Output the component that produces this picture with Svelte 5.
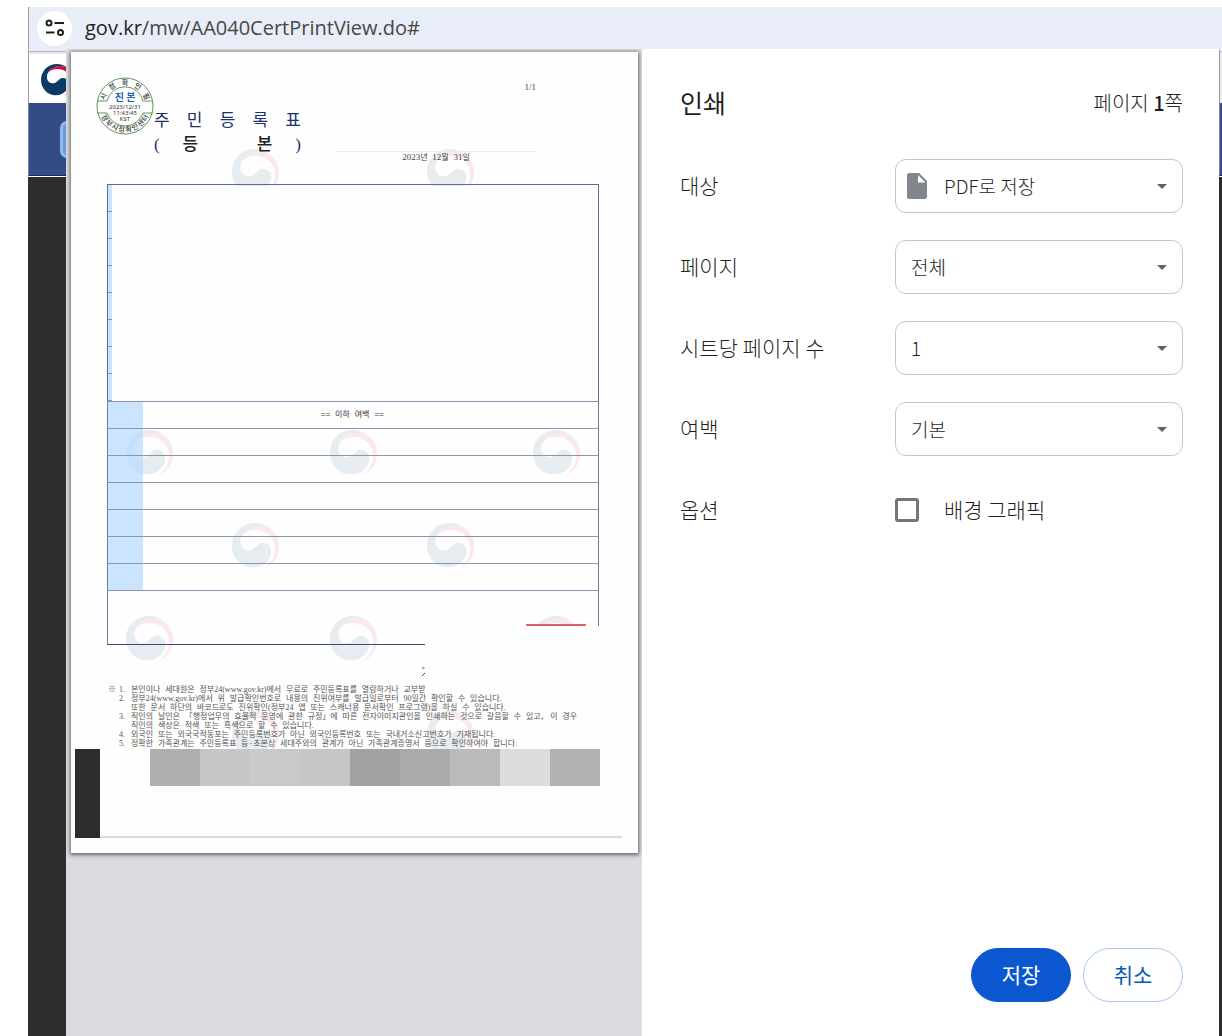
<script lang="ts">
	interface Setting {
		id: string;
		label: string;
		options: string[];
		icon?: boolean;
	}

	interface Note {
		mark?: string;
		num?: string;
		text: string;
		cut?: boolean;
	}

	const settings: Setting[] = [
		{ id: 'target', label: '대상', options: ['PDF로 저장'], icon: true },
		{ id: 'pages', label: '페이지', options: ['전체'] },
		{ id: 'sheet', label: '시트당 페이지 수', options: ['1', '2', '4', '6', '9', '16'] },
		{ id: 'margin', label: '여백', options: ['기본', '없음', '최소', '맞춤'] }
	];

	const notes: Note[] = [
		{
			mark: '※',
			num: '1.',
			text: '본인이나 세대원은 정부24(www.gov.kr)에서 무료로 주민등록표를 열람하거나 교부받',
			cut: true
		},
		{
			num: '2.',
			text: '정부24(www.gov.kr)에서 위 발급확인번호로 내용의 진위여부를 발급일로부터 90일간 확인할 수 있습니다.'
		},
		{ text: '또한 문서 하단의 바코드로도 진위확인(정부24 앱 또는 스캐너용 문서확인 프로그램)을 하실 수 있습니다.' },
		{
			num: '3.',
			text: '직인의 날인은 「행정업무의 효율적 운영에 관한 규정」에 따른 전자이미지관인을 인쇄하는 것으로 갈음할 수 있고, 이 경우'
		},
		{ text: '직인의 색상은 적색 또는 흑색으로 할 수 있습니다.' },
		{
			num: '4.',
			text: '외국인 또는 외국국적동포는 주민등록번호가 아닌 외국인등록번호 또는 국내거소신고번호가 기재됩니다.'
		},
		{
			num: '5.',
			text: '정확한 가족관계는 주민등록표 등·초본상 세대주와의 관계가 아닌 가족관계증명서 등으로 확인하여야 합니다.'
		}
	];

	// h is the visible part of the mark, 45 is a whole one
	const watermarks = [
		{ x: 161, y: 97, h: 37 },
		{ x: 356, y: 97, h: 37 },
		{ x: 55, y: 378, h: 45 },
		{ x: 259, y: 378, h: 45 },
		{ x: 462, y: 378, h: 45 },
		{ x: 161, y: 471, h: 45 },
		{ x: 356, y: 471, h: 45 },
		{ x: 55, y: 564, h: 45 },
		{ x: 259, y: 564, h: 45 },
		{ x: 462, y: 564, h: 9 },
		{ x: 161, y: 659, h: 38 },
		{ x: 356, y: 659, h: 38 }
	];

	const mosaic = ['#afafaf', '#c6c6c6', '#cacaca', '#c6c6c6', '#a2a2a2', '#aaaaaa', '#bababa', '#dddddd', '#b1b1b1'];

	// letters round the stamp, angle from 12 o'clock and from 6 o'clock
	const ringTop = [...'시점확인필'].map((c, i) => ({ c, angle: (i - 2) * 33 }));
	const ringBottom = [...'정부시점확인센터'].map((c, i) => ({ c, angle: (3.5 - i) * 17 }));

	let background = false;
</script>

{#snippet taegeuk()}
	<path
		class="blue"
		d="M118 20C104 7 88 0 68 0C30 0 0 30 0 68C0 105 28 133 62 133C95 133 118 110 118 84C118 70 108 59 92 59C76 59 70 82 50 82C36 82 25 70 25 56C25 30 50 8 80 8C95 8 108 12 118 20Z"
	/>
	<path
		class="red"
		d="M30 38C38 20 55 8 80 8C95 8 108 12 118 20C132 32 141 48 141 70C141 100 125 125 98 135C118 120 130 100 130 78C130 45 105 21 70 21C52 21 38 28 30 38Z"
	/>
{/snippet}

{#snippet mixed(text: string)}
	{#each text.split(/([\w.()\/]+)/) as part, i}{#if i % 2}<span class="latin">{part}</span>{:else}{part}{/if}{/each}
{/snippet}

<div class="browser">
	<header class="address">
		<button class="site-info" aria-label="사이트 정보 보기">
			<svg width="20" height="18" viewBox="0 0 20 18" fill="none" stroke="#1f1f1f" stroke-width="2">
				<circle cx="4" cy="4" r="2.5" />
				<path d="M9.500 4H19M1 13.500H9.500" />
				<circle cx="15.500" cy="13.500" r="2.500" />
			</svg>
		</button>
		<span class="url"><b>gov.kr</b>/mw/AA040CertPrintView.do#</span>
	</header>

	<div class="stage">
		<div class="site left">
			<div class="site-head">
				<svg class="logo" width="33" height="32" viewBox="0 0 141 136">{@render taegeuk()}</svg>
			</div>
			<div class="site-nav"><span class="site-button"></span></div>
			<div class="site-body"></div>
		</div>

		<main class="dialog">
			<section class="preview">
				<article class="paper">
					<svg class="watermarks" viewBox="0 0 567 801">
						{#each watermarks as w}
							<svg x={w.x} y={w.y} width="47" height={w.h} viewBox="0 0 141 {w.h * 3}">
								{@render taegeuk()}
							</svg>
						{/each}
					</svg>

					<div class="paper-head">
						<svg class="stamp" width="58" height="58" viewBox="0 0 58 58">
							<g fill="none" stroke="#5d9a58">
								<circle cx="29" cy="29" r="28" />
								<path d="M1 24H11A18.500 18.500 0 0 1 47 24H57M1 36H11A19 19 0 0 0 47 36H57" />
							</g>
							<g text-anchor="middle" fill="#333">
								{#each ringTop as r}
									<text class="ring" x="29" y="8" transform="rotate({r.angle} 29 29)">{r.c}</text>
								{/each}
								{#each ringBottom as r}
									<text class="ring" x="29" y="55" transform="rotate({r.angle} 29 29)">{r.c}</text>
								{/each}
								<text class="genuine" x="29" y="24">진 본</text>
								<text class="time" x="29" y="32">2023/12/31</text>
								<text class="time" x="29" y="38">11:43:45</text>
								<text class="time" x="29" y="44">KST</text>
							</g>
						</svg>
						<div class="titles">
							<h1>
								<span>주</span> <span>민</span> <span>등</span> <span>록</span> <span>표</span>
							</h1>
							<h2>
								<span>(</span>
								<strong><span>등</span> <span>본</span></strong>
								<span>)</span>
							</h2>
						</div>
						<div class="issue">
							<span class="count">{@render mixed('1/1')}</span>
							<time>{@render mixed('2023년 12월 31일')}</time>
						</div>
					</div>

					<div class="form">
						<div class="erased"></div>
						<table>
							<tbody>
								{#each Array(7) as _, i}
									<tr>
										<td class="shade"></td>
										<td>{i === 0 ? '== 이하 여백 ==' : ''}</td>
									</tr>
								{/each}
							</tbody>
						</table>
						<div class="closing">
							<div class="closing-left"></div>
							<div class="closing-right"><span></span></div>
						</div>
					</div>

					<div class="fragment">
						<svg width="4" height="10" viewBox="0 0 4 10" fill="none" stroke="#444">
							<path d="M1 1H3.500M4 6L1 9" />
						</svg>
					</div>

					<div class="notes">
						{#each notes as note}
							<p class:cut={note.cut}>
								<span>{note.mark ?? ''}</span>
								<span>{@render mixed(note.num ?? '')}</span>
								<span>{@render mixed(note.text)}</span>
							</p>
						{/each}
					</div>

					<div class="paper-foot">
						<div class="block"></div>
						<div class="foot-line">
							<div class="mosaic">
								{#each mosaic as color}
									<span style="background: {color};"></span>
								{/each}
							</div>
						</div>
					</div>
				</article>
			</section>

			<form class="settings" on:submit|preventDefault>
				<div class="settings-head">
					<h3>인쇄</h3>
					<span>페이지 <b>1</b>쪽</span>
				</div>
				{#each settings as s (s.id)}
					<div class="row">
						<label for={s.id}>{s.label}</label>
						<div class="select">
							{#if s.icon}
								<svg class="file" width="20" height="26" viewBox="0 0 20 26">
									<path
										fill="#80868b"
										fill-rule="evenodd"
										d="M2.500 0H12L20 8V23.500A2.500 2.500 0 0 1 17.500 26H2.500A2.500 2.500 0 0 1 0 23.500V2.500A2.500 2.500 0 0 1 2.500 0ZM11 2V9.500H18.500Z"
									/>
								</svg>
							{/if}
							<select id={s.id} class:with-icon={s.icon}>
								{#each s.options as option}
									<option>{option}</option>
								{/each}
							</select>
							<svg class="arrow" width="10" height="5" viewBox="0 0 10 5">
								<path fill="#5f6368" d="M0 0H10L5 5Z" />
							</svg>
						</div>
					</div>
				{/each}
				<div class="row">
					<span>옵션</span>
					<label class="check">
						<input type="checkbox" bind:checked={background} />
						<span>배경 그래픽</span>
					</label>
				</div>
				<div class="actions">
					<button class="save" type="submit">저장</button>
					<button class="cancel" type="button">취소</button>
				</div>
			</form>
		</main>

		<div class="site right">
			<div class="site-head"></div>
			<div class="site-nav"></div>
			<div class="site-body"></div>
		</div>
	</div>
</div>

<style>
	:global(body) {
		margin: 0;
		background: #fff;
	}

	.browser {
		box-sizing: border-box;
		display: flex;
		flex-direction: column;
		min-height: 100vh;
		padding: 7px 0 0 28px;
		font-family: 'Noto Sans CJK KR', sans-serif;
		color: #1f1f1f;
	}

	h1,
	h2,
	h3,
	p {
		margin: 0;
		font-weight: 400;
	}

	svg {
		display: block;
	}

	.address {
		display: flex;
		align-items: center;
		gap: 13px;
		height: 42px;
		padding-left: 8px;
		background: #e9edf7;
		border-left: 1px solid #9a9ca5;
	}

	.site-info {
		display: flex;
		align-items: center;
		justify-content: center;
		width: 35px;
		height: 35px;
		padding: 0;
		border: none;
		border-radius: 50%;
		background: #fff;
	}

	.url {
		font-family: 'Open Sans', 'Noto Sans', sans-serif;
		font-size: 20px;
		line-height: 24px;
		color: #474747;
	}

	.url b {
		font-weight: 400;
		color: #1f1f1f;
	}

	.stage {
		display: flex;
		flex: 1;
	}

	.site {
		display: flex;
		flex-direction: column;
		overflow: hidden;
	}

	.left {
		width: 38px;
	}

	.right {
		width: 3px;
	}

	.site-head {
		box-sizing: border-box;
		height: 54px;
		padding: 13px 0 0 12px;
		border-top: 2px solid #e9edf7;
		border-left: 1px solid #9a9ca5;
		box-shadow: inset 0 1px #b4b6bd, inset 0 3px #e6e6e6;
	}

	.right .site-head {
		padding: 0;
		background: #eee;
	}

	.logo {
		overflow: visible;
	}

	.logo .blue {
		fill: #0b3a66;
	}

	.logo .red {
		fill: #d0103a;
	}

	.site-nav {
		box-sizing: border-box;
		height: 73px;
		padding: 18px 0 0 31px;
		background: #344b86;
		border-left: 1px solid #7c86a3;
		border-bottom: 1px solid #1c2c55;
	}

	.right .site-nav {
		padding: 0;
	}

	.site-button {
		display: block;
		box-sizing: border-box;
		width: 40px;
		height: 37px;
		border: 3px solid #8dbcf5;
		border-radius: 7px;
		background: #6f9bdd;
	}

	.site-body {
		flex: 1;
		margin-top: 1px;
		background: #2d2d2d;
	}

	.dialog {
		display: grid;
		grid-template-columns: 1fr 577px;
		flex: 1;
		background: #fff;
	}

	.preview {
		padding: 3px 4px 0 5px;
		background: #dadce0;
		overflow: hidden;
	}

	.paper {
		position: relative;
		background: #fefefe;
		box-shadow: 0 1px 4px 1px rgba(0, 0, 0, 0.55);
		font-family: 'Liberation Serif', 'Noto Sans CJK KR', serif;
		padding-bottom: 15px;
	}

	.paper > div {
		position: relative;
	}

	.watermarks {
		position: absolute;
		top: 0;
		left: 0;
		width: 100%;
	}

	.watermarks .blue {
		fill: #e7ecf0;
	}

	.watermarks .red {
		fill: #fbe8eb;
	}

	.paper-head {
		display: flex;
		box-sizing: border-box;
		height: 132px;
		padding: 25px 102px 0 25px;
	}

	.ring {
		font-family: 'Noto Sans CJK KR', sans-serif;
		font-size: 7px;
		font-weight: 500;
	}

	.genuine {
		font-family: 'Noto Sans CJK KR', sans-serif;
		font-size: 10px;
		font-weight: 700;
		fill: #1d66b0;
	}

	.time {
		font-family: 'Noto Sans', sans-serif;
		font-size: 6px;
	}

	.titles {
		width: 147px;
		padding-top: 32px;
		color: #1f2f6b;
	}

	h1,
	h2 {
		display: flex;
		justify-content: space-between;
		font-size: 17px;
		line-height: 24px;
	}

	h2 strong {
		display: flex;
		justify-content: space-between;
		width: 90px;
		font-weight: 500;
		color: #1f1f1f;
	}

	.issue {
		display: flex;
		flex-direction: column;
		width: 200px;
		margin-left: auto;
		font-family: 'Liberation Mono', 'Noto Sans CJK KR', monospace;
		font-size: 8px;
		line-height: 11px;
		color: #444;
	}

	.issue .latin {
		font-size: 9px;
	}

	.latin {
		font-family: 'Liberation Serif', serif;
	}

	.count {
		align-self: flex-end;
		padding: 5px 0 58px;
	}

	time {
		text-align: center;
		border-top: 1px solid #e6eef5;
	}

	.form {
		margin: 0 39px 0 36px;
	}

	.erased {
		box-sizing: border-box;
		height: 217px;
		border: 1px solid #5c6b94;
		border-bottom: none;
		background: repeating-linear-gradient(#cbe5ff 0 26px, #7f93bb 26px 27px) left / 4px 100% no-repeat;
	}

	table {
		width: 100%;
		border-collapse: collapse;
		table-layout: fixed;
		border: 1px solid #6d7a9c;
		font-family: 'Liberation Mono', 'Noto Sans CJK KR', monospace;
		font-size: 8px;
		line-height: 10px;
		text-align: center;
		color: #333;
	}

	td {
		box-sizing: border-box;
		height: 27px;
		padding: 0 36px 0 0;
		border-top: 1px solid #8a96b1;
		border-bottom: 1px solid #8a96b1;
	}

	.shade {
		width: 35px;
		padding: 0;
		background: rgba(184, 219, 255, 0.72);
	}

	.closing {
		display: flex;
		align-items: flex-start;
	}

	.closing-left {
		box-sizing: border-box;
		width: 318px;
		height: 54px;
		border-left: 1px solid #6d7a9c;
		border-bottom: 1px solid #3b4a74;
	}

	.closing-right {
		display: flex;
		align-items: flex-end;
		justify-content: flex-end;
		box-sizing: border-box;
		flex: 1;
		height: 35px;
		padding-right: 12px;
		border-right: 1px solid #6d7a9c;
	}

	.closing-right span {
		width: 60px;
		height: 2px;
		background: #dc6464;
	}

	.fragment {
		height: 40px;
		padding-left: 350px;
		box-sizing: border-box;
		padding-top: 22px;
	}

	.notes {
		padding-left: 37px;
		font-family: 'Liberation Mono', 'Noto Sans CJK KR', monospace;
		font-size: 8px;
		line-height: 9px;
		color: #555;
	}

	.notes p {
		display: grid;
		grid-template-columns: 11px 12px 1fr;
		height: 9px;
		white-space: nowrap;
	}

	.notes .cut {
		width: 317px;
		overflow: hidden;
	}

	.paper-foot {
		display: flex;
		margin: 1px 16px 0 4px;
	}

	.block {
		width: 25px;
		height: 89px;
		background: #2d2d2d;
	}

	.foot-line {
		flex: 1;
		border-bottom: 2px solid #dadbe0;
	}

	.mosaic {
		display: flex;
		height: 37px;
		margin: 0 22px 0 50px;
	}

	.mosaic span {
		flex: 1;
	}

	.settings {
		display: flex;
		flex-direction: column;
		gap: 27px;
		padding: 25px 36px 34px 38px;
		font-size: 21px;
		font-weight: 300;
	}

	.settings-head {
		display: flex;
		align-items: center;
		justify-content: space-between;
		height: 56px;
		margin-bottom: 2px;
		font-size: 20px;
	}

	.settings-head b {
		font-weight: 500;
	}

	h3 {
		font-size: 25px;
	}

	.row {
		display: grid;
		grid-template-columns: 215px 1fr;
		align-items: center;
		min-height: 54px;
		line-height: 28px;
	}

	.row > label,
	.row span {
		padding-bottom: 2px;
	}

	.select {
		position: relative;
	}

	select {
		appearance: none;
		display: block;
		width: 100%;
		height: 54px;
		padding: 0 40px 0 15px;
		border: 1px solid #c7c7c7;
		border-radius: 11px;
		background: #fff;
		font: inherit;
		font-size: 19px;
		color: inherit;
	}

	select.with-icon {
		padding-left: 48px;
	}

	.file {
		position: absolute;
		top: 14px;
		left: 12px;
	}

	.arrow {
		position: absolute;
		top: 25px;
		right: 16px;
	}

	.row .check {
		display: flex;
		align-items: center;
		gap: 25px;
		padding-bottom: 0;
	}

	.check input {
		appearance: none;
		box-sizing: border-box;
		width: 24px;
		height: 24px;
		margin: 0;
		border: 3px solid #747775;
		border-radius: 3px;
	}

	.check input:checked {
		background: #0b57d0;
	}

	.actions {
		display: flex;
		justify-content: flex-end;
		gap: 12px;
		margin-top: auto;
	}

	.actions button {
		width: 100px;
		height: 54px;
		padding: 0 0 2px;
		border: 1px solid #a8c7f0;
		border-radius: 27px;
		background: #fff;
		font: inherit;
		font-weight: 400;
		color: #0b57b8;
	}

	.actions .save {
		border-color: #0b57d0;
		background: #0b57d0;
		color: #fff;
	}
</style>
